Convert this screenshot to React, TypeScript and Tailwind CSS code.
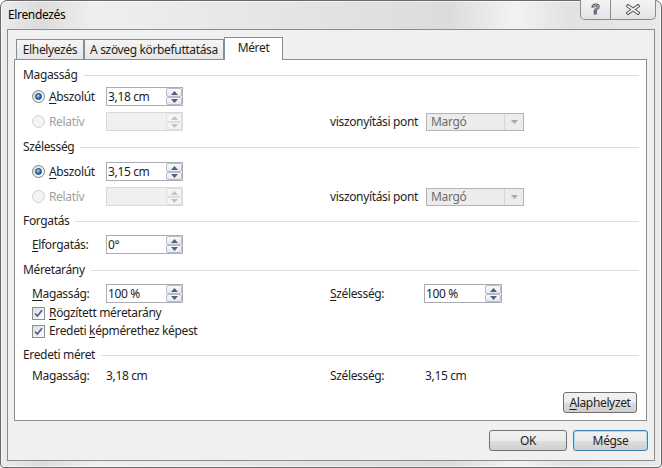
import React from "react";

const Up = ({ disabled }: { disabled?: boolean }) => (
  <svg width="7" height="4" viewBox="0 0 7 4">
    <path d="M0 4 L3.5 0 L7 4Z" fill={disabled ? "#c4c4c4" : "#4e5f86"} />
  </svg>
);
const Down = ({ disabled }: { disabled?: boolean }) => (
  <svg width="7" height="4" viewBox="0 0 7 4">
    <path d="M0 0 L3.5 4 L7 0Z" fill={disabled ? "#c4c4c4" : "#4e5f86"} />
  </svg>
);

function Spin({ value, disabled, w }: { value?: string; disabled?: boolean; w?: string }) {
  return (
    <div
      className={`flex h-[19px] ${w ?? "w-[77px]"} border ${
        disabled ? "border-[#d9d9d9] bg-[#f0f0f0]" : "border-[#abadb3] bg-white"
      }`}
    >
      <div className="flex-1 flex items-center pl-[1px] text-[12px] leading-none text-[#1e1e1e]">{value}</div>
      <div className="flex flex-col w-[16px] h-[17px]">
        <div
          className={`h-[9px] flex items-center justify-center border rounded-[2px] ${
            disabled
              ? "border-[#dedede] bg-[#f4f4f4]"
              : "border-[#b7bcc6] bg-[linear-gradient(#fafafa,#e6e8ec)]"
          }`}
        >
          <Up disabled={disabled} />
        </div>
        <div
          className={`h-[8px] flex items-center justify-center border rounded-[2px] ${
            disabled
              ? "border-[#dedede] bg-[#f4f4f4]"
              : "border-[#b7bcc6] bg-[linear-gradient(#fafafa,#e6e8ec)]"
          }`}
        >
          <Down disabled={disabled} />
        </div>
      </div>
    </div>
  );
}

function Radio({ checked, disabled }: { checked?: boolean; disabled?: boolean }) {
  return (
    <div
      className={`w-[13px] h-[13px] rounded-full border flex items-center justify-center ${
        disabled
          ? "border-[#cfcfcf] bg-[#f4f4f4]"
          : "border-[#7f8385] bg-[linear-gradient(135deg,#d8d8d8,#ffffff)]"
      }`}
    >
      {checked && (
        <div className="w-[7px] h-[7px] rounded-full border border-[#1b3f6b] bg-[radial-gradient(circle_at_40%_35%,#b8e4ff,#2f86d0_45%,#174f8c)]" />
      )}
    </div>
  );
}

function Check() {
  return (
    <div className="w-[13px] h-[13px] border border-[#8e8f8f] bg-[linear-gradient(135deg,#dcdcdc,#ffffff)] flex items-center justify-center">
      <svg width="9" height="9" viewBox="0 0 9 9">
        <path d="M1 4.6 L3.4 7 L8 1.2" stroke="#4a5f97" strokeWidth="1.7" fill="none" />
      </svg>
    </div>
  );
}

function Heading({ children, cls }: { children: React.ReactNode; cls: string }) {
  return (
    <div className={`flex items-center h-[20px] ${cls}`}>
      <span className="text-[#1e1e1e]">{children}</span>
      <div className="flex-1 h-px bg-[#d5dfe5] ml-[6px]" />
    </div>
  );
}

function Dropdown() {
  return (
    <div className="flex h-[18px] w-[98px] border border-[#b4b4b4] bg-[#ececec]">
      <div className="flex-1 flex items-center pl-[4px] text-[#6d6d6d] leading-none">Margó</div>
      <div className="w-[19px] border-l border-[#d4d4d4] flex items-center justify-center">
        <svg width="7" height="4" viewBox="0 0 7 4">
          <path d="M0 0 L3.5 4 L7 0Z" fill="#a8a8a8" />
        </svg>
      </div>
    </div>
  );
}

const U = ({ children }: { children: React.ReactNode }) => (
  <span className="underline decoration-1 underline-offset-[2px]">{children}</span>
);

const btn =
  "h-[21px] rounded-[3px] border flex items-center justify-center text-[12px] text-[#1e1e1e] leading-none";

export default function App() {
  return (
    <div className="w-[662px] h-[468px] font-['Noto_Sans',sans-serif] text-[12px] tracking-[-0.35px] text-[#1e1e1e]">
      <div className="w-full h-full border border-[#6b6b6b] rounded-t-[7px] rounded-b-[4px] flex flex-col bg-[linear-gradient(90deg,#ececec_0%,#dcdcdc_6%,#efefef_14%,#e6e6e6_40%,#dcdcdc_68%,#f3f3f3_78%,#e2e2e2_86%,#e9e9e9_100%)] shadow-[inset_0_0_0_1px_rgba(255,255,255,0.55)]">
        {/* title bar */}
        <div className="h-[28px] flex items-start justify-between">
          <div className="h-[28px] flex items-center pl-[7px] text-black">Elrendezés</div>
          <div className="-mt-px mr-[5px] flex h-[20px] border border-t-0 border-[#8a8a8a] rounded-b-[5px] bg-[linear-gradient(#f4f4f4,#e3e3e3)] overflow-hidden">
            <div className="w-[30px] border-r border-[#8a8a8a] flex items-center justify-center font-['Liberation_Sans',sans-serif] font-bold text-[14px] text-[#f6f6f6] [-webkit-text-stroke:1px_#555] tracking-normal">
              ?
            </div>
            <div className="w-[44px] flex items-center justify-center">
              <svg width="14" height="11" viewBox="0 0 14 11">
                <path d="M2 2 L12 9 M12 2 L2 9" stroke="#5a5a5a" strokeWidth="3.6" strokeLinecap="square" />
                <path d="M2 2 L12 9 M12 2 L2 9" stroke="#f6f6f6" strokeWidth="1.6" strokeLinecap="square" />
              </svg>
            </div>
          </div>
        </div>
        {/* client */}
        <div className="flex-1 px-[6px] pb-[6px] flex">
          <div className="flex-1 border border-[#8c8c8c] bg-[#f0f0f0] pl-[6px] pr-[7px] pt-[7px] flex flex-col">
            {/* tabs */}
            <div className="h-[22px] pl-[2px] flex items-end">
              <div className="w-[68px] h-[20px] border border-b-0 border-[#898c95] bg-[linear-gradient(#f5f5f5,#e6e6e6)] flex items-center justify-center">
                Elhelyezés
              </div>
              <div className="w-[140px] h-[20px] border border-b-0 border-[#898c95] bg-[linear-gradient(#f5f5f5,#e6e6e6)] flex items-center justify-center">
                A szöveg körbefuttatása
              </div>
              <div className="relative z-10 w-[59px] h-[23px] -mb-px border border-b-0 border-[#898c95] bg-white flex items-center justify-center pb-[3px]">
                Méret
              </div>
            </div>
            {/* panel */}
            <div className="h-[362px] border border-[#898c95] bg-white pl-[8px] pr-[7px] flex flex-col">
              <Heading cls="mt-[5px]">Magasság</Heading>
              <div className="flex items-center h-[19px] mt-[2px]">
                <div className="w-[83px] flex items-center pl-[9px]">
                  <Radio checked />
                  <span className="ml-[4px]">
                    <U>A</U>bszolút
                  </span>
                </div>
                <Spin value="3,18 cm" />
              </div>
              <div className="flex items-center h-[19px] mt-[6px]">
                <div className="w-[307px] flex items-center">
                  <div className="w-[83px] flex items-center pl-[9px]">
                    <Radio disabled />
                    <span className="ml-[4px] text-[#a0a0a0]">Relatív</span>
                  </div>
                  <Spin disabled />
                </div>
                <div className="w-[96px]">viszonyítási pont</div>
                <Dropdown />
              </div>

              <Heading cls="mt-[6px]">Szélesség</Heading>
              <div className="flex items-center h-[19px] mt-[5px]">
                <div className="w-[83px] flex items-center pl-[9px]">
                  <Radio checked />
                  <span className="ml-[4px]">
                    <U>A</U>bszolút
                  </span>
                </div>
                <Spin value="3,15 cm" />
              </div>
              <div className="flex items-center h-[19px] mt-[6px]">
                <div className="w-[307px] flex items-center">
                  <div className="w-[83px] flex items-center pl-[9px]">
                    <Radio disabled />
                    <span className="ml-[4px] text-[#a0a0a0]">Relatív</span>
                  </div>
                  <Spin disabled />
                </div>
                <div className="w-[96px]">viszonyítási pont</div>
                <Dropdown />
              </div>

              <Heading cls="mt-[5px]">Forgatás</Heading>
              <div className="flex items-center h-[19px] mt-[4px]">
                <div className="w-[83px] pl-[9px]">
                  <U>E</U>lforgatás:
                </div>
                <Spin value="0°" />
              </div>

              <Heading cls="mt-[6px]">Méretarány</Heading>
              <div className="flex items-center h-[19px] mt-[4px]">
                <div className="w-[307px] flex items-center">
                  <div className="w-[83px] pl-[9px]">
                    <U>M</U>agasság:
                  </div>
                  <Spin value="100 %" />
                </div>
                <div className="w-[94px]">
                  <U>S</U>zélesség:
                </div>
                <Spin value="100 %" w="w-[78px]" />
              </div>
              <div className="flex items-center h-[18px] mt-[1px] pl-[9px]">
                <Check />
                <span className="ml-[4px]">
                  <U>R</U>ögzített méretarány
                </span>
              </div>
              <div className="flex items-center h-[18px] pl-[9px]">
                <Check />
                <span className="ml-[4px]">
                  Eredeti <U>k</U>épmérethez képest
                </span>
              </div>

              <Heading cls="mt-[5px]">Eredeti méret</Heading>
              <div className="flex items-center h-[20px] mt-[1px]">
                <div className="w-[307px] flex items-center">
                  <div className="w-[83px] pl-[9px]">Magasság:</div>
                  <div>3,18 cm</div>
                </div>
                <div className="w-[95px]">Szélesség:</div>
                <div>3,15 cm</div>
              </div>

              <div className="flex justify-end mt-[6px] mr-[2px]">
                <button className={`${btn} w-[74px] border-[#707070] bg-[linear-gradient(#f2f2f2_0%,#ebebeb_50%,#dddddd_51%,#cfcfcf_100%)]`}>
                  <U>A</U>laphelyzet
                </button>
              </div>
            </div>
            {/* footer */}
            <div className="flex justify-end gap-[6px] mt-[9px] -mr-px">
              <button className={`${btn} w-[78px] border-[#707070] bg-[linear-gradient(#f2f2f2_0%,#ebebeb_50%,#dddddd_51%,#cfcfcf_100%)]`}>
                OK
              </button>
              <button className={`${btn} w-[75px] border-[#3c7fb1] shadow-[inset_0_0_0_1px_#a8dcf7] bg-[linear-gradient(#f2f2f2_0%,#ebebeb_50%,#dddddd_51%,#cfcfcf_100%)]`}>
                Mégse
              </button>
            </div>
          </div>
        </div>
      </div>
    </div>
  );
}
